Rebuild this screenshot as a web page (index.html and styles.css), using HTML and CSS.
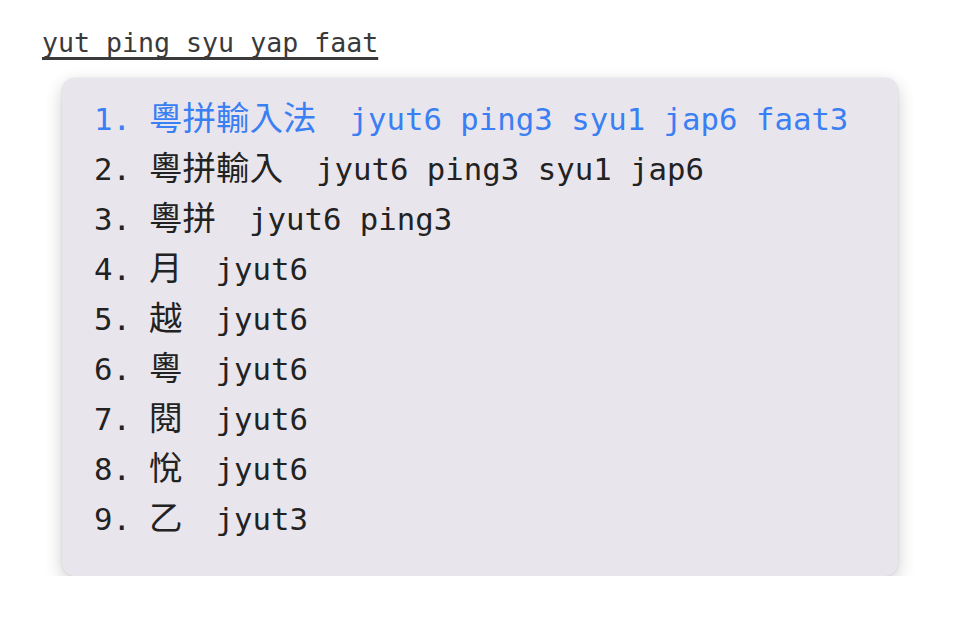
FILE: index.html
```html
<!DOCTYPE html>
<html lang="zh-Hant">
<head>
<meta charset="utf-8">
<link rel="stylesheet" href="styles.css">
</head>
<body>
<div class="page">
  <div class="preedit">yut ping syu yap faat</div>
  <ol class="panel">
    <li class="cand active"><span class="num">1.</span><span class="word">粵拼輸入法</span><span class="jp">jyut6 ping3 syu1 jap6 faat3</span></li>
    <li class="cand"><span class="num">2.</span><span class="word">粵拼輸入</span><span class="jp">jyut6 ping3 syu1 jap6</span></li>
    <li class="cand"><span class="num">3.</span><span class="word">粵拼</span><span class="jp">jyut6 ping3</span></li>
    <li class="cand"><span class="num">4.</span><span class="word">月</span><span class="jp">jyut6</span></li>
    <li class="cand"><span class="num">5.</span><span class="word">越</span><span class="jp">jyut6</span></li>
    <li class="cand"><span class="num">6.</span><span class="word">粵</span><span class="jp">jyut6</span></li>
    <li class="cand"><span class="num">7.</span><span class="word">閱</span><span class="jp">jyut6</span></li>
    <li class="cand"><span class="num">8.</span><span class="word">悅</span><span class="jp">jyut6</span></li>
    <li class="cand"><span class="num">9.</span><span class="word">乙</span><span class="jp">jyut3</span></li>
  </ol>
</div>
</body>
</html>
```
FILE: styles.css
```css
html, body {
  margin: 0;
  padding: 0;
  background: #ffffff;
}
.page {
  padding: 26px 0 0 42px;
  font-family: "DejaVu Sans Mono", "Noto Sans CJK TC", monospace;
}
.preedit {
  display: inline-block;
  font-size: 26.6px;
  line-height: 34px;
  color: #3a3a3a;
  text-decoration: underline;
  text-decoration-thickness: 3px;
  text-underline-offset: 5px;
  text-decoration-skip-ink: none;
}
.panel {
  list-style: none;
  margin: 18px 0 0 20px;
  padding: 13px 0 35px 32px;
  width: 804px;
  background: #e9e5ec;
  border-radius: 13px;
  box-shadow: 0 6px 18px rgba(0, 0, 0, 0.2), 0 0 2px rgba(0, 0, 0, 0.12);
}
.cand {
  display: flex;
  align-items: baseline;
  height: 50px;
  line-height: 50px;
  font-size: 30.7px;
  color: #222222;
}
.cand.active {
  color: #3a7ff3;
}
.num {
  width: 55px;
  flex: none;
}
.word {
  font-family: "Noto Sans CJK TC", sans-serif;
  font-size: 33.5px;
  margin-right: 33px;
}
.jp {
  white-space: pre;
}
```
